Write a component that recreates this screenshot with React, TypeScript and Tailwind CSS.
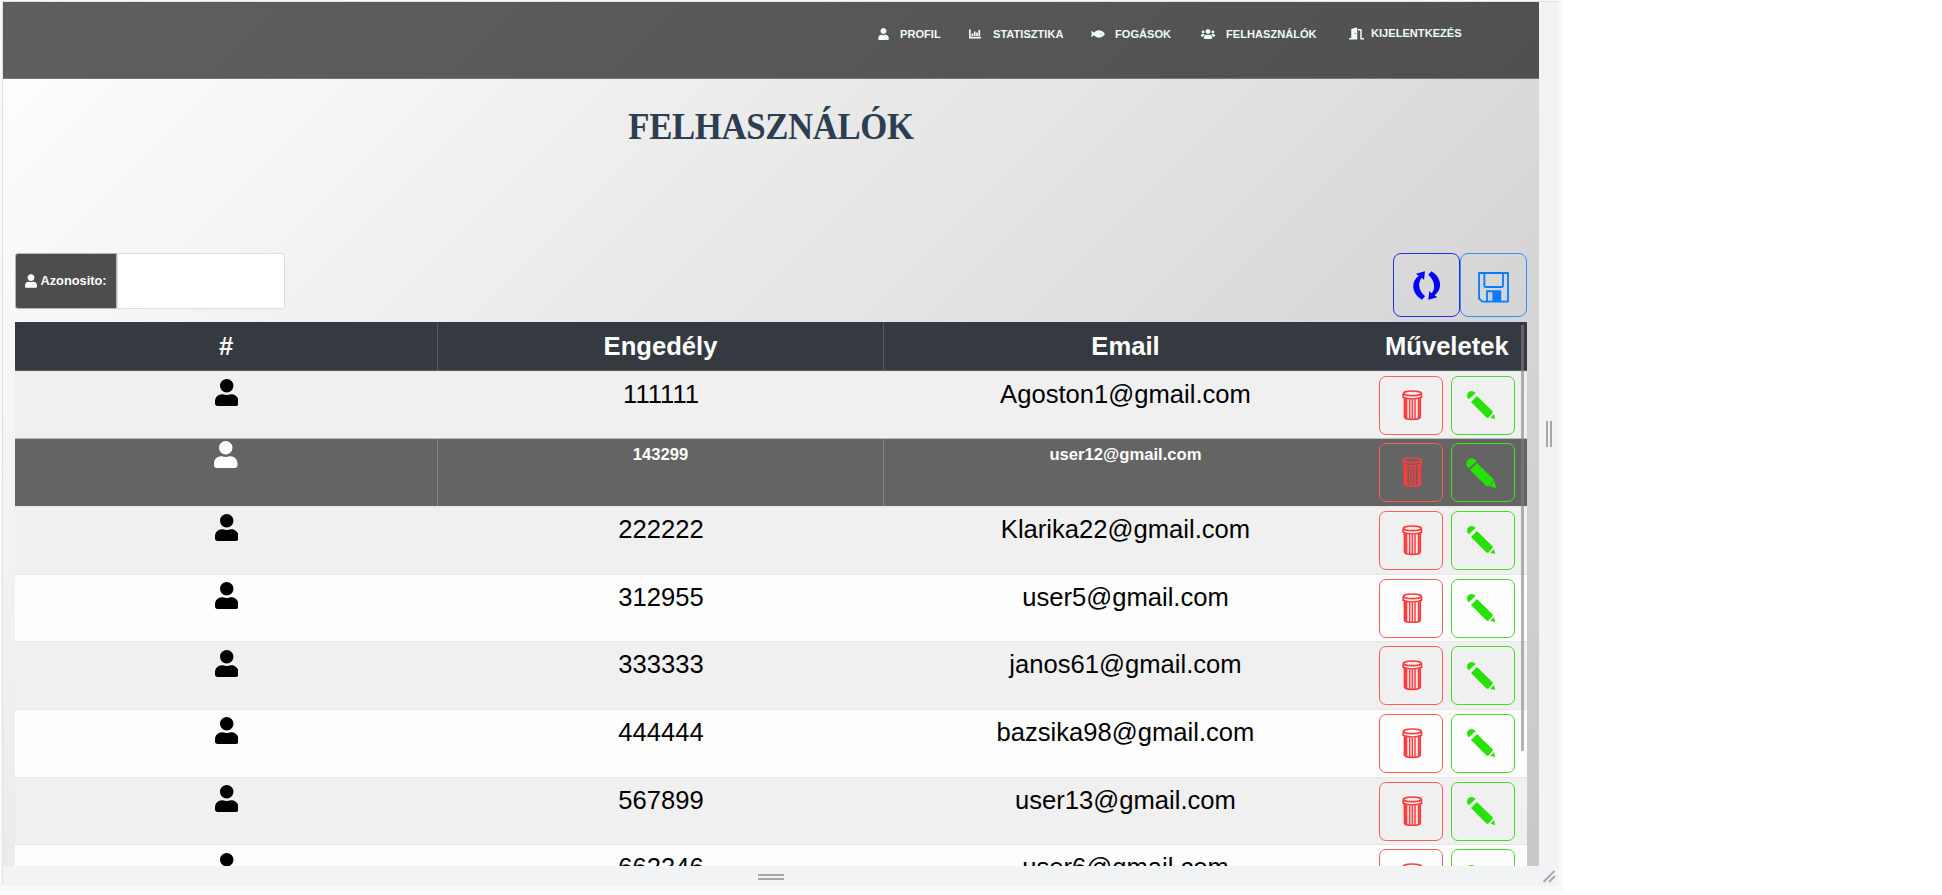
import { FaUser, FaFish, FaUsers, FaDoorOpen } from 'react-icons/fa';

const rows = [
  { id: '111111', email: 'Agoston1@gmail.com' },
  { id: '143299', email: 'user12@gmail.com', active: true },
  { id: '222222', email: 'Klarika22@gmail.com' },
  { id: '312955', email: 'user5@gmail.com' },
  { id: '333333', email: 'janos61@gmail.com' },
  { id: '444444', email: 'bazsika98@gmail.com' },
  { id: '567899', email: 'user13@gmail.com' },
  { id: '662346', email: 'user6@gmail.com' },
];

const columns = 'grid grid-cols-[423px_446px_483px_159.7px]';

function ChartIcon() {
  return (
    <svg viewBox="0 0 12 10" className="mr-[12px] h-[10px] w-[12px]" fill="none" stroke="currentColor">
      <path d="M0.800 0.500V8.700H12" strokeWidth="1.800" />
      <path d="M3.400 4.500V7M5.700 2.500V7M8 3.500V7M10.300 1V7" strokeWidth="1.700" />
    </svg>
  );
}

function RefreshIcon() {
  const arrow = 'M228 98L255 91L252 117L246 110C233 122 234 148 255 166L246 176C214 158 212 122 236 104Z';
  return (
    <svg viewBox="219 90 82 87" className="h-[29px] w-[27.3px]" fill="#0000ff">
      <path d={arrow} />
      <path d={arrow} transform="rotate(180 260 133.5)" />
    </svg>
  );
}

function SaveIcon() {
  return (
    <svg viewBox="414 97 93 92" className="h-[30.6px] w-[31px]" fill="none" stroke="#0a7bff" strokeWidth="5.5" strokeLinejoin="round">
      <path d="M417 100H504V186H427L417 177Z" />
      <path d="M433 100V138Q433 142 437 142H485Q489 142 489 138V100" />
      <path d="M441 186V155H481V186" />
      <path d="M457 157H481V186H457Z" fill="#0a7bff" stroke="none" />
      <path d="M450 160V186" strokeWidth="2" opacity=".4" />
    </svg>
  );
}

function TrashIcon() {
  return (
    <svg viewBox="187 443 62 92" className="h-[30.7px] w-[20.7px] shrink-0" fill="none" stroke="#ff3b3b" strokeWidth="5">
      <ellipse cx="218" cy="453" rx="27" ry="7" />
      <path d="M190.500 454V465Q218 475 245.500 465V454" />
      <path d="M194.500 466V523Q194.500 531 218 531Q241.500 531 241.500 523V466" strokeWidth="5.500" />
      <path d="M199.500 469V527" strokeWidth="7" />
      <path d="M210 471V530M218 472V530M226 471V530" strokeWidth="4.500" />
      <path d="M237 469V528" strokeWidth="5.500" />
    </svg>
  );
}

function PencilIcon({ bold }: { bold?: boolean }) {
  return (
    <svg viewBox="378 447 90 90" className="size-[30px] shrink-0 overflow-visible" fill="#28e207" stroke={bold ? '#28e207' : 'none'} strokeWidth={bold ? 4 : 0}>
      <path d="M386 475C377 466 381 450 395 450C400 450 404 453 407 456Z" />
      <path d="M393 483L411 465L459 512L456 518L445 530L440 530Z" />
      <path d="M451 530L462 519L465.500 534Z" />
      {bold && <path d="M388 479L410 458M448 532L461 516" stroke="#3f8f38" strokeWidth="2" />}
    </svg>
  );
}

function UserRow({ id, email, active, striped }: { id: string; email: string; active?: boolean; striped: boolean }) {
  const tone = active
    ? 'bg-[#646464] text-white border-[#b9bbbd]'
    : striped
      ? 'bg-[#f0f0f0] text-black border-[#e6e6e6]'
      : 'bg-[#fefefe] text-black border-[#e6e6e6]';
  const text = active
    ? 'text-[16.64px] leading-[25px] font-bold'
    : 'text-[25.6px] leading-[38.4px]';
  const divider = active ? 'border-r border-[#808284]' : '';
  return (
    <div className={`${columns} h-[67.65px] shrink-0 border-t text-center ${tone}`}>
      <div className={`flex justify-center ${active ? 'pt-[2px]' : 'pt-[7.5px]'} ${divider}`}>
        <FaUser className="h-[27px] w-[23.5px]" />
      </div>
      <div className={`pt-[3px] ${text} ${divider}`}>{id}</div>
      <div className={`pt-[3px] ${text}`}>{email}</div>
      <div className="flex gap-2 pt-[4px] pl-[12px]">
        <button className="flex h-[59px] w-16 items-center justify-center rounded-[7px] border border-[#ff5c5c] pl-[3px]">
          <TrashIcon />
        </button>
        <button className="flex h-[59px] w-16 items-center justify-center rounded-[7px] border border-[#43dc2b] pr-[4px]">
          <PencilIcon bold={active} />
        </button>
      </div>
    </div>
  );
}

export default function App() {
  return (
    <div className="h-[895px] w-[1942px] overflow-hidden bg-white font-['Liberation_Sans',sans-serif]">
      <div className="h-[891px] w-[1563px] bg-[#f8f9f9] pl-[3px] pt-[2px]">
        <div className="grid h-[884px] w-[1556px] grid-cols-[1536px_20px] grid-rows-[864px_20px] bg-[#f1f3f5] shadow-[-1px_-1px_0_#dfe1e2]">
          <div className="flex flex-col overflow-hidden bg-[linear-gradient(135deg,#ffffff_0%,#c8c8c8_100%)]">
            <nav className="flex h-[77px] shrink-0 border-b border-[#777] bg-[linear-gradient(135deg,#5f5f5f_0%,#505050_100%)] pt-[24px] text-[11.1px] leading-[16px] font-bold text-[#eefcfc]">
              <div className="box-content flex h-4 w-[91px] items-center pl-[875px]">
                <FaUser className="mr-[11px] h-[12px] w-[11px]" />
                <span>PROFIL</span>
              </div>
              <div className="flex h-4 w-[122px] items-center">
                <ChartIcon />
                <span>STATISZTIKA</span>
              </div>
              <div className="flex h-4 w-[110px] items-center">
                <FaFish className="mr-[10px] h-[12px] w-[14px]" />
                <span>FOGÁSOK</span>
              </div>
              <div className="flex h-4 w-[148px] items-center">
                <FaUsers className="mr-[11px] h-[14px] w-[14px]" />
                <span>FELHASZNÁLÓK</span>
              </div>
              <div className="-mt-px flex h-4 items-center">
                <FaDoorOpen className="mr-[7px] h-[13px] w-[15px]" />
                <span>KIJELENTKEZÉS</span>
              </div>
            </nav>
            <h1 className="h-[174px] shrink-0 scale-x-[0.94] pt-[24px] text-center font-['Liberation_Serif',serif] text-[37px] leading-[48px] font-bold tracking-[-0.4px] text-[#2c3e50]">
              FELHASZNÁLÓK
            </h1>
            <div className="flex h-[69px] shrink-0 items-start justify-between pl-[12px] pr-[12px]">
              <div className="flex h-[56px]">
                <label className="flex w-[102px] items-center justify-center gap-[3px] rounded-l-[3px] border border-[#b5b8bb] bg-[#4d4d4d] text-[12.8px] font-bold text-white">
                  <FaUser className="h-[14px] w-[12px]" />
                  Azonosito:
                </label>
                <input className="w-[168px] rounded-r-[3px] border border-[#dadee2] bg-white outline-none" />
              </div>
              <div className="flex">
                <button className="flex h-16 w-[67px] items-center justify-center rounded-[8px] border border-[#2b28ee]">
                  <RefreshIcon />
                </button>
                <button className="flex h-16 w-[67px] items-center justify-center rounded-[8px] border border-[#3290f2] pt-[5px]">
                  <SaveIcon />
                </button>
              </div>
            </div>
            <div className="relative ml-[12px] flex w-[1511.700px] flex-col">
              <div className={`${columns} h-[48.7px] shrink-0 border-b border-[#5c656c] bg-[#353a41] pt-[1px] text-center text-[25.6px] leading-[46px] font-bold text-white`}>
                <div className="border-r border-[#555b61]">#</div>
                <div className="border-r border-[#555b61]">Engedély</div>
                <div>Email</div>
                <div>Műveletek</div>
              </div>
              {rows.map((row, index) => (
                <UserRow key={row.id} {...row} striped={index % 2 === 0} />
              ))}
              <div className="absolute top-[3px] right-[3px] h-[426px] w-[3px] bg-[#808080]/60" />
            </div>
          </div>
          <div className="flex items-center justify-center gap-[2px]">
            <span className="h-[26px] w-[2px] bg-[#a6a7a8]" />
            <span className="h-[26px] w-[2px] bg-[#a6a7a8]" />
          </div>
          <div className="flex flex-col items-center justify-center gap-[2px] pt-[2px]">
            <span className="h-[2px] w-[26px] bg-[#a6a7a8]" />
            <span className="h-[2px] w-[26px] bg-[#a6a7a8]" />
          </div>
          <svg viewBox="0 0 20 20" className="size-5" stroke="#a6a7a8" strokeWidth="1.800">
            <path d="M4.500 16L15.500 5M10 16L16 10" />
          </svg>
        </div>
      </div>
    </div>
  );
}
